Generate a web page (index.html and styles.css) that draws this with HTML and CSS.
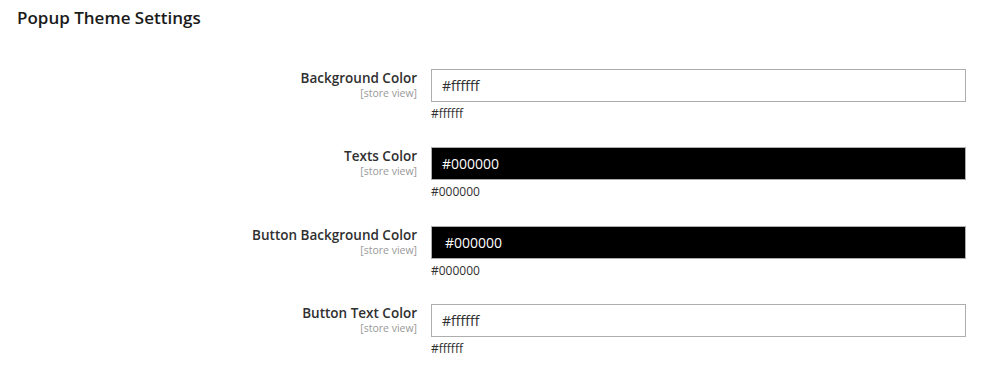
FILE: index.html
```html
<!DOCTYPE html>
<html>
<head>
<meta charset="utf-8">
<link rel="stylesheet" href="styles.css">
</head>
<body>
<div class="section">
  <h2 class="title">Popup Theme Settings</h2>
  <div class="fields">
    <div class="row">
      <div class="label"><span class="name">Background Color</span><span class="scope">[store view]</span></div>
      <div class="control">
        <div class="input">#ffffff</div>
        <div class="note">#ffffff</div>
      </div>
    </div>
    <div class="row">
      <div class="label"><span class="name">Texts Color</span><span class="scope">[store view]</span></div>
      <div class="control">
        <div class="input dark">#000000</div>
        <div class="note">#000000</div>
      </div>
    </div>
    <div class="row">
      <div class="label"><span class="name">Button Background Color</span><span class="scope">[store view]</span></div>
      <div class="control">
        <div class="input dark shifted">#000000</div>
        <div class="note">#000000</div>
      </div>
    </div>
    <div class="row">
      <div class="label"><span class="name">Button Text Color</span><span class="scope">[store view]</span></div>
      <div class="control">
        <div class="input">#ffffff</div>
        <div class="note">#ffffff</div>
      </div>
    </div>
  </div>
</div>
</body>
</html>
```

FILE: styles.css
```css
html, body {
  margin: 0;
  padding: 0;
  background: #ffffff;
}
body {
  font-family: "Open Sans", "Noto Sans", sans-serif;
  color: #303030;
  width: 1000px;
  height: 372px;
  overflow: hidden;
}
.section {
  padding: 6px 0 0 0;
}
.title {
  margin: 0 0 0 17px;
  font-size: 17px;
  font-weight: 600;
  line-height: 24px;
  color: #1a1a1a;
}
.fields {
  display: flex;
  flex-direction: column;
  row-gap: 25.33px;
  margin-top: 39px;
}
.row {
  display: grid;
  grid-template-columns: 417px 535px;
  column-gap: 14px;
}
.label {
  display: flex;
  flex-direction: column;
  align-items: flex-end;
  text-align: right;
}
.name {
  font-size: 13.5px;
  font-weight: 600;
  line-height: 19px;
  color: #303030;
  margin-top: 0;
}
.scope {
  font-size: 10.5px;
  line-height: 14px;
  color: #999999;
  margin-top: -2px;
}
.input {
  box-sizing: border-box;
  height: 33px;
  border: 1px solid #adadad;
  padding: 0 10px;
  font-size: 14px;
  line-height: 31px;
  color: #303030;
  background: #ffffff;
}
.input.dark {
  background: #000000;
  color: #ffffff;
}
.input.shifted {
  padding-left: 13px;
}
.note {
  font-size: 12px;
  line-height: 17px;
  margin-top: 3px;
  color: #303030;
}
```
